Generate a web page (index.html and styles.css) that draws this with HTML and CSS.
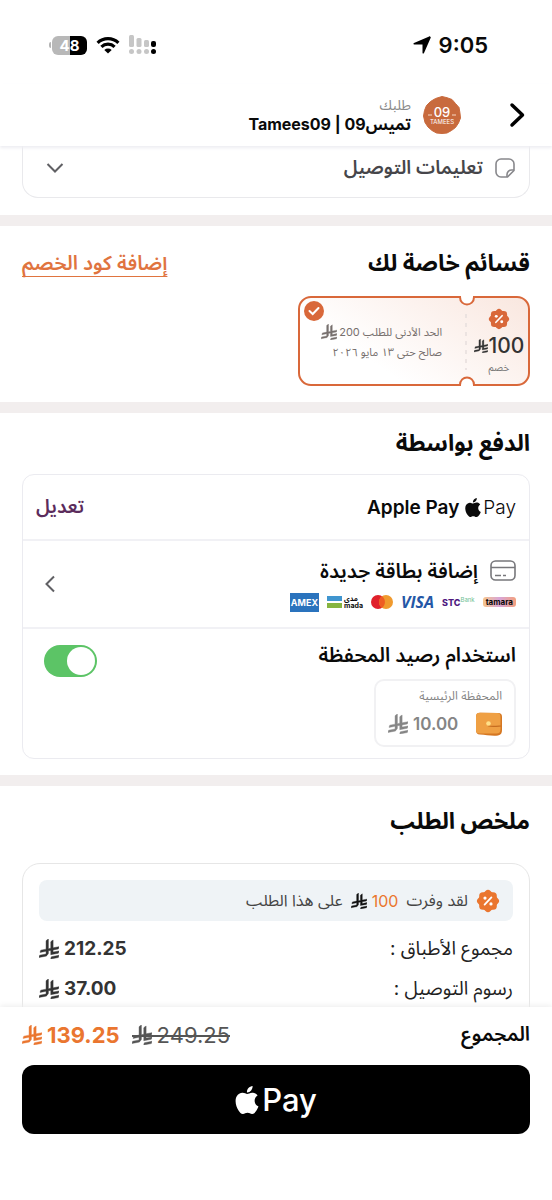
FILE: index.html
```html
<!DOCTYPE html>
<html lang="ar" dir="rtl">
<head>
<meta charset="utf-8">
<meta name="viewport" content="width=device-width, initial-scale=1">
<title>طلبك</title>
<link rel="stylesheet" href="styles.css">
</head>
<body>
<svg class="defs" aria-hidden="true">
  <symbol id="riyal" viewBox="0 0 1124 1257" preserveAspectRatio="none"><path fill="currentColor" stroke="currentColor" stroke-width="24" d="M699.62 1113.02c-20.06 44.48-33.32 92.75-38.4 143.37l424.51-90.24c20.06-44.47 33.31-92.75 38.4-143.37l-424.51 90.24ZM1085.73 895.8c20.06-44.47 33.32-92.75 38.4-143.37l-330.68 70.33v-135.2l292.27-62.11c20.06-44.47 33.32-92.75 38.4-143.37l-330.68 70.27V66.13c-50.67 28.45-95.67 66.32-132.25 110.99v403.35l-132.25 28.11V0c-50.67 28.44-95.67 66.32-132.25 110.99v525.69l-295.91 62.88c-20.06 44.47-33.33 92.75-38.42 143.37l334.33-71.05v170.26l-358.3 76.14c-20.06 44.47-33.32 92.75-38.4 143.37l375.04-79.7c30.53-6.35 56.77-24.4 73.83-49.24l68.78-101.97v-.02c7.14-10.55 11.3-23.27 11.3-36.97v-149.98l132.25-28.11v270.4l424.53-90.28Z"/></symbol>
  <symbol id="apple" viewBox="2 0 20 24"><path fill="currentColor" d="M12.152 6.896c-.948 0-2.415-1.078-3.96-1.04-2.04.027-3.91 1.183-4.961 3.014-2.117 3.675-.546 9.103 1.519 12.09 1.013 1.454 2.208 3.09 3.792 3.039 1.52-.065 2.09-.987 3.935-.987 1.831 0 2.35.987 3.96.948 1.637-.026 2.676-1.48 3.676-2.948 1.156-1.688 1.636-3.325 1.662-3.415-.039-.013-3.182-1.221-3.22-4.857-.026-3.04 2.48-4.494 2.597-4.559-1.429-2.09-3.623-2.324-4.39-2.376-2-.156-3.675 1.09-4.61 1.09zM15.53 3.83c.843-1.012 1.4-2.427 1.245-3.83-1.207.052-2.662.805-3.532 1.818-.78.896-1.454 2.338-1.273 3.714 1.338.104 2.715-.688 3.559-1.701"/></symbol>
  <symbol id="percent" viewBox="0 0 24 24">
    <g fill="currentColor"><rect x="3.2" y="3.2" width="17.6" height="17.6" rx="3.6"/><rect x="3.2" y="3.2" width="17.6" height="17.6" rx="3.6" transform="rotate(45 12 12)"/></g>
    <path d="M15.4 8.4 8.6 15.6" stroke="#fff" stroke-width="1.8" stroke-linecap="round"/><circle cx="9" cy="9.1" r="1.6" fill="#fff"/><circle cx="15" cy="14.9" r="1.6" fill="#fff"/>
  </symbol>
</svg>

<div class="status" dir="ltr">
  <div class="status-side">
    <div class="battery"><span>48</span></div>
    <svg width="24" height="18" viewBox="0 0 24 18" fill="none" stroke="#000" stroke-width="3.2"><path d="M1.6 6.8a15 15 0 0 1 20.8 0"/><path d="M5.4 10.8a9.6 9.6 0 0 1 13.2 0"/><path d="M12 17.6 8.3 13.9a5.4 5.4 0 0 1 7.4 0Z" fill="#000" stroke="none"/></svg>
    <svg class="signal" width="28" height="20" viewBox="0 0 28 20"><g fill="#c6c6c6"><rect x="0" y="0" width="5" height="12" rx="1.5"/><rect x="7.500" y="3" width="5" height="9" rx="1.500"/><rect x="15" y="5" width="5" height="7" rx="1.500"/><circle cx="2.500" cy="16.500" r="2.500"/><circle cx="10" cy="16.500" r="2.500"/><circle cx="17.500" cy="16.500" r="2.500"/></g><rect x="22" y="6" width="5" height="6" rx="2"/><circle cx="24.500" cy="16.500" r="2.500"/></svg>
  </div>
  <div class="status-side">
    <svg width="18" height="18" viewBox="0 0 18 18"><path d="M17.300.7c.5.2.6.6.4 1.100L11 17c-.4.900-1.500.8-1.500-.3V8.500H1.300C.2 8.500.1 7.400 1 7L16.200.4c.4-.2.800 0 1.100.3Z"/></svg>
    <time>9:05</time>
  </div>
</div>

<header class="topbar">
  <button class="back" aria-label="رجوع"><svg width="16" height="26" viewBox="0 0 16 26" fill="none" stroke="#000" stroke-width="3.500" stroke-linecap="round" stroke-linejoin="round"><path d="m3 3 10.500 10L3 23"/></svg></button>
  <div class="logo" dir="ltr">
    <svg width="38" height="38" viewBox="0 0 38 38"><path fill="#c86a3d" stroke="#c86a3d" stroke-linejoin="round" d="m19 .5 5 1.200 5 1.800 3.500 4 3.500 4 .9 5 .6 5.500-2 5-3 4.500-4 3-4.500 2.500-5 .5-5.500-.5-4.500-2.500-4-3.500-3-4.500L.5 20l1-5.500 2-5 4-4 5-3Z"/><path stroke="#f7d9c6" d="M5 19h4M29 19h4"/></svg>
    <span class="logo-text"><b>09</b><small>TAMEES</small></span>
  </div>
  <div class="shop"><span>طلبك</span><h1>تميس09 | Tamees09</h1></div>
</header>

<main>
  <section class="section notes">
    <button class="notes-card">
      <svg width="20" height="20" viewBox="0 0 20 20" fill="none" stroke="#88888c" stroke-width="1.600" stroke-linejoin="round"><path d="M6 1h8a5 5 0 0 1 5 5v6.500L12.500 19H6a5 5 0 0 1-5-5V6a5 5 0 0 1 5-5Z"/><path d="M19 12h-2.500a4.500 4.500 0 0 0-4.500 4.500V19"/></svg>
      <span>تعليمات التوصيل</span>
      <svg class="push" width="18" height="12" viewBox="0 0 18 12" fill="none" stroke="#606064" stroke-width="2"><path d="m1.500 2 7.500 7.500L16.500 2"/></svg>
    </button>
  </section>

  <section class="section coupons">
    <div class="section-head"><h2>قسائم خاصة لك</h2><a href="#code">إضافة كود الخصم</a></div>
    <button class="coupon">
      <svg class="coupon-bg" width="232" height="90" viewBox="0 0 232 90"><defs><linearGradient id="peach" gradientUnits="userSpaceOnUse" x1="110" y1="90" x2="190" y2="-30"><stop offset="0" stop-color="#fff"/><stop offset="1" stop-color="#f9e6de"/></linearGradient></defs><path d="M13 1h149c0 10 14 10 14 0h43a12 12 0 0 1 12 12v64a12 12 0 0 1-12 12h-43c0-10-14-10-14 0H13A12 12 0 0 1 1 77V13A12 12 0 0 1 13 1Z" fill="url(#peach)" stroke="#d9683a" stroke-width="2"/><path d="M168 18v56" stroke="#e6dedd" stroke-width="1.500" stroke-dasharray="4 5"/></svg>
      <span class="coupon-value"><svg class="seal" width="22" height="22"><use href="#percent"/></svg><span class="amount"><span>100</span><svg width="14" height="14"><use href="#riyal"/></svg></span><small>خصم</small></span>
      <span class="coupon-info"><span class="amount"><span>الحد الأدنى للطلب 200</span><svg width="16" height="16"><use href="#riyal"/></svg></span><span>صالح حتى ١٣ مايو ٢٠٢٦</span></span>
      <svg class="coupon-check" width="20" height="20" viewBox="0 0 20 20"><circle cx="10" cy="10" r="10" fill="#d9683a"/><path d="m5.500 10 3.200 3L14.500 7" fill="none" stroke="#fff" stroke-width="2" stroke-linecap="round"/></svg>
    </button>
  </section>

  <section class="section payment">
    <h2>الدفع بواسطة</h2>
    <div class="methods">
      <div class="method">
        <span class="pay-mark" dir="ltr"><svg width="16" height="19"><use href="#apple"/></svg>Pay</span>
        <strong class="pay-name">Apple Pay</strong>
        <button class="edit push">تعديل</button>
      </div>
      <button class="method add-card">
        <span class="add-main">
          <span class="add-title"><svg width="26" height="22" viewBox="0 0 26 22" fill="none" stroke="#77777b" stroke-width="1.600"><rect x="1" y="1" width="24" height="19" rx="4.500"/><path d="M1 7.500h24M5 15.500h6M13 15.500h3"/></svg><strong>إضافة بطاقة جديدة</strong></span>
          <span class="brands">
            <span class="tamara">tamara</span>
            <span class="stc" dir="ltr">STC<sup>Bank</sup></span>
            <span class="visa">VISA</span>
            <svg width="22" height="14" viewBox="0 0 22 14"><circle cx="7" cy="7" r="7" fill="#e0202b"/><circle cx="15" cy="7" r="7" fill="#f09a2e"/><path d="M11 1.300a7 7 0 0 1 0 11.400 7 7 0 0 1 0-11.400Z" fill="#ee5c24"/></svg>
            <span class="mada" dir="ltr"><svg width="15" height="12" viewBox="0 0 15 12"><path fill="#3f95cf" d="M0 0h15v5H0z"/><path fill="#86b440" d="M0 7h15v5H0z"/></svg><span><b>مدى</b><b>mada</b></span></span>
            <span class="amex">AMEX</span>
          </span>
        </span>
        <svg class="push" width="12" height="18" viewBox="0 0 12 18" fill="none" stroke="#606064" stroke-width="2"><path d="M10 1.500 2.500 9l7.500 7.500"/></svg>
      </button>
      <div class="method wallet-row">
        <div>
          <label for="wallet">استخدام رصيد المحفظة</label>
          <div class="wallet">
            <span>المحفظة الرئيسية</span>
            <div class="wallet-balance">
              <svg width="26" height="24" viewBox="0 0 26 24"><path d="M4 .8 22 1c3 0 4 1.500 4 4v13c0 3-1 5-4 5.500-6 .6-12-.5-18-1-3-.2-4-1.500-4-4.500V5C0 2 1 .8 4 .8Z" fill="#d57722"/><path d="M4 .8 21 1c2.500 0 3.500 1.500 3.500 4v12c0 3-1 4.500-4 4.500H4c-3 0-4-1-4-4V5C0 2 1 .8 4 .8Z" fill="#efa044"/><path d="M25 14c-5 .3-10 .8-13-.2" fill="none" stroke="#c66d20" stroke-width="1.200"/><circle cx="12.500" cy="11.500" r="2.300" fill="#ffe08a"/></svg>
              <span class="amount"><span>10.00</span><svg width="20" height="20"><use href="#riyal"/></svg></span>
            </div>
          </div>
        </div>
        <input class="switch" type="checkbox" role="switch" id="wallet" checked>
      </div>
    </div>
  </section>

  <section class="section summary">
    <h2>ملخص الطلب</h2>
    <div class="bill">
      <p class="saved"><svg class="seal" width="24" height="24"><use href="#percent"/></svg><span>لقد وفرت</span><span class="amount"><span class="orange">100</span><svg width="16" height="16"><use href="#riyal"/></svg></span><span>على هذا الطلب</span></p>
      <dl>
        <div><dt>مجموع الأطباق :</dt><dd class="amount"><span>212.25</span><svg width="20" height="20"><use href="#riyal"/></svg></dd></div>
        <div><dt>رسوم التوصيل :</dt><dd class="amount"><span>37.00</span><svg width="20" height="20"><use href="#riyal"/></svg></dd></div>
      </dl>
    </div>
  </section>
</main>

<footer class="checkout">
  <div class="total">
    <strong>المجموع</strong>
    <s class="amount push"><span>249.25</span><svg width="20" height="20"><use href="#riyal"/></svg></s>
    <b class="amount orange"><span>139.25</span><svg width="20" height="20"><use href="#riyal"/></svg></b>
  </div>
  <button class="pay-button" dir="ltr"><svg width="24" height="28"><use href="#apple"/></svg>Pay</button>
</footer>
</body>
</html>
```

FILE: styles.css
```css
* { box-sizing: border-box; }

body {
  margin: 0;
  height: 100vh;
  display: flex;
  flex-direction: column;
  background: #fff;
  color: #0a0a0a;
  font-family: Inter, "Noto Sans Arabic", "DejaVu Sans", sans-serif;
  font-size: 19px;
}

h1, h2, p, dl, dd { margin: 0; }
svg { display: block; flex: none; }
button { padding: 0; border: 0; background: none; color: inherit; font: inherit; cursor: pointer; }
.defs { position: absolute; width: 0; height: 0; }
.push { margin-inline-start: auto; }
.orange { color: #ea762f; }
.seal { color: #ea762f; }
.amount { display: inline-flex; align-items: center; gap: 5px; white-space: nowrap; }

/* status bar */
.status {
  flex: none;
  height: 84px;
  padding: 6px 64px 0 49px;
  display: flex;
  align-items: center;
  justify-content: space-between;
}
.status-side { display: flex; align-items: center; gap: 8px; }
.status-side:first-child { gap: 9px; }
.status time { font-size: 22px; font-weight: 600; }
.battery {
  display: flex;
  align-items: center;
  gap: 1px;
  color: #fff;
  font-size: 15px;
  font-weight: 700;
}
.battery::before { content: ""; width: 2px; height: 6px; border-radius: 2px 0 0 2px; background: #b5b5b5; }
.battery span {
  width: 35px;
  line-height: 19px;
  border-radius: 6px;
  text-align: center;
  background: linear-gradient(90deg, #b8b8b8 50%, #000 50%);
}

/* shop header */
.topbar {
  flex: none;
  height: 62px;
  padding: 0 27px;
  display: flex;
  align-items: center;
  gap: 12px;
  z-index: 1;
  box-shadow: 0 2px 3px #ededf2;
}
.back { margin-inline-end: 36px; }
.logo { position: relative; }
.logo-text {
  position: absolute;
  inset: 0;
  display: flex;
  flex-direction: column;
  align-items: center;
  justify-content: center;
  color: #fff;
  line-height: 1;
}
.logo-text b { font-size: 13px; font-weight: 500; }
.logo-text small { font-size: 6px; }
.shop span { display: block; color: #8a8a8a; font-size: 14px; line-height: 18px; }
.shop h1 { font-size: 16px; font-weight: 700; line-height: 20px; }

main { flex: 1; min-height: 0; overflow: hidden; }
.section { padding: 0 22px 16px; border-bottom: 11px solid #f2eeee; }
.section:last-child { border: 0; }
h2 { font-size: 23px; font-weight: 700; line-height: 32px; }

.notes { padding-bottom: 17px; }
.notes-card {
  width: 100%;
  height: 52px;
  padding: 0 14px 8px 23px;
  display: flex;
  align-items: center;
  gap: 12px;
  border: 1px solid #e9e9ec;
  border-top: 0;
  border-radius: 0 0 16px 16px;
  color: #46464a;
  font-weight: 600;
}

/* coupons */
.coupons { padding-top: 21px; }
.section-head { display: flex; align-items: center; justify-content: space-between; }
.section-head a {
  color: #e0743f;
  font-size: 20px;
  font-weight: 600;
  line-height: 32px;
  text-underline-offset: 6px;
  text-decoration-skip-ink: none;
  text-decoration-thickness: 1px;
}
.coupon {
  position: relative;
  width: 232px;
  height: 90px;
  margin-top: 17px;
  display: flex;
  text-align: start;
}
.coupon-bg { position: absolute; inset: 0; }
.coupon-value, .coupon-info { position: relative; display: flex; flex-direction: column; }
.coupon-value { width: 62px; padding-top: 12px; align-items: center; color: #333; }
.coupon-value .seal { color: #d9683a; }
.coupon-value .amount { gap: 1px; font-size: 21px; font-weight: 500; line-height: 32px; }
.coupon-value small { font-size: 10px; line-height: 10px; color: #777; }
.coupon-info { padding: 26px 26px 0 0; color: #77706e; font-size: 11px; line-height: 20px; }
.coupon-info .amount { gap: 2px; }
.coupon-check { position: absolute; left: 6px; top: 5px; }

/* payment */
.payment { padding-top: 14px; }
.methods { margin-top: 15px; border: 1px solid #ebebf0; border-radius: 12px; }
.method { width: 100%; padding: 0 13px; display: flex; align-items: center; text-align: start; }
.method + .method { border-top: 2px solid #f1f1f5; }
.method:first-child { height: 64px; }
.pay-mark { display: flex; align-items: center; gap: 2px; font-size: 19px; font-weight: 300; }
.pay-name { margin-inline-start: 6px; font-weight: 600; }
.edit { font-weight: 600; color: #5b2c5c; }
.add-card { height: 88px; padding-left: 21px; }
.add-title { display: flex; align-items: center; gap: 12px; font-size: 20px; line-height: 28px; }
.add-title strong { font-weight: 600; }
.brands { margin-top: 8px; display: flex; align-items: center; gap: 8px; line-height: 1; }
.tamara {
  padding: 1px 3px;
  border-radius: 3px;
  background: linear-gradient(90deg, #f6c58b, #d8a5d8 50%, #f3a07c);
  font-size: 8px;
  font-weight: 700;
}
.stc { color: #4f1a7f; font-size: 9px; font-weight: 800; }
.stc sup { color: #6fbf94; font-size: 6px; font-weight: 400; }
.visa { color: #2457a6; font: italic 700 16px/1 "Open Sans", sans-serif; }
.mada { display: flex; align-items: center; gap: 2px; font-size: 7px; }
.mada b { display: block; line-height: 7px; }
.amex { padding: 5px 1px; background: #2a73bd; color: #fff; font-size: 9px; font-weight: 700; }

.wallet-row { padding-top: 12px; padding-bottom: 11px; padding-left: 21px; align-items: flex-start; justify-content: space-between; }
.wallet-row label { display: block; font-size: 20px; font-weight: 600; line-height: 28px; }
.wallet {
  width: 142px;
  margin-top: 10px;
  padding: 6px 12px;
  border: 2px solid #f1f1f3;
  border-radius: 10px;
  color: #858585;
}
.wallet > span { display: block; font-size: 12px; line-height: 18px; }
.wallet-balance { display: flex; align-items: center; justify-content: space-between; margin-top: 4px; line-height: 30px; }
.wallet-balance .amount { font-size: 17px; font-weight: 600; }
.switch {
  appearance: none;
  width: 53px;
  height: 32px;
  margin: 4px 0 0;
  padding: 2px;
  border-radius: 16px;
  background: #d8d8d8;
  direction: ltr;
}
.switch::before { content: ""; display: block; width: 28px; height: 28px; border-radius: 50%; background: #fff; }
.switch:checked { background: #5cc466; }
.switch:checked::before { margin-left: auto; }

/* summary */
.summary { padding-top: 19px; }
.bill { margin-top: 26px; padding: 16px; border: 1px solid #e6e6e6; border-radius: 18px; }
.saved {
  height: 41px;
  padding: 0 13px;
  display: flex;
  align-items: center;
  gap: 8px;
  border-radius: 8px;
  background: #eff3f6;
  color: #444;
  font-size: 16px;
}
.saved .amount svg { color: #111; }
dl { padding-top: 8px; }
dl div { display: flex; align-items: center; justify-content: space-between; height: 40px; line-height: 28px; }
dt { color: #222; }
dd { font-weight: 700; color: #333; }

/* checkout bar */
.checkout { flex: none; height: 193px; padding: 12px 22px 0; z-index: 1; background: #fff; box-shadow: 0 -1px 6px #ececec; }
.total { display: flex; align-items: center; gap: 12px; height: 32px; font-size: 22px; }
.total strong { font-size: 20px; font-weight: 600; }
.total b { font-weight: 700; }
.total s { position: relative; color: #555; text-decoration: none; }
.total s::after { content: ""; position: absolute; left: 0; right: 0; top: 50%; height: 2px; background: #555; }
.pay-button {
  width: 100%;
  height: 69px;
  margin-top: 14px;
  display: flex;
  align-items: center;
  justify-content: center;
  gap: 3px;
  border-radius: 12px;
  background: #000;
  color: #fff;
  font-size: 31px;
  font-weight: 500;
}
```
